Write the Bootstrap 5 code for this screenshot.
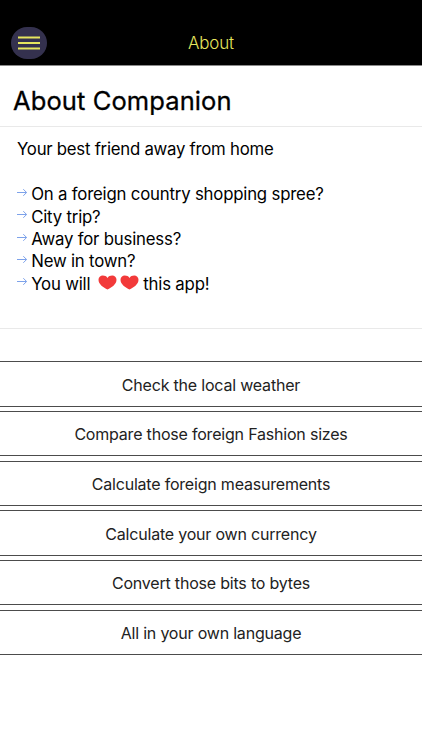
<!DOCTYPE html>
<html lang="en">
<head>
<meta charset="utf-8">
<meta name="viewport" content="width=device-width, initial-scale=1">
<title>About</title>
<link href="https://cdn.jsdelivr.net/npm/bootstrap@5.3.0/dist/css/bootstrap.min.css" rel="stylesheet">
<style>
body { font-family: Inter, Roboto, sans-serif; color: #000; min-height: 750px; overflow: hidden; }
.app-bar { height: 66px; background: #000; border-bottom: 1px solid #8a8a8a; padding: 21px 10.5px 0; display: grid; grid-template-columns: 37px 1fr 37px; }
.menu-btn, .menu-btn:hover { width: 36.5px; height: 32.5px; background: #34314e; border-radius: 16.25px; }
.app-title { color: #e6e65e; font-size: 17px; font-weight: 300; letter-spacing: -.15px; padding-top: 1.5px; }
.page-head { height: 61px; padding-left: 13px; padding-top: 10px; border-bottom: 1px solid #e9e9e9; }
.page-head h1 { font-size: 25.5px; font-weight: 400; letter-spacing: .1px; -webkit-text-stroke: .3px #000; }
.intro { height: 202px; padding: 11px 17px 0; border-bottom: 1px solid #e9e9e9; font-size: 16.8px; line-height: 22.35px; letter-spacing: -.2px; }
.tagline { letter-spacing: -.26px; }
.intro ul { margin-top: 23px; }
.intro li { height: 22.35px; white-space: pre; }
.arrow { width: 10px; height: 9px; margin: -4px 4.2px 0 0; }
.heart { width: 19px; height: 15px; margin: -3px 0 0 7.6px; }
.heart + .heart { margin-left: 3.4px; }
.features { margin-top: 32.3px; gap: 4.3px; }
.feature { height: 45.4px; border: solid #4c4c4c; border-width: 1px 0; border-radius: 0; font-size: 16px; color: #222; letter-spacing: -.2px; padding: 1.5px 0 0; }
</style>
<script src="https://cdn.jsdelivr.net/npm/bootstrap@5.3.0/dist/js/bootstrap.bundle.min.js"></script>
</head>
<body class="bg-white">
<svg class="d-none">
  <symbol id="arrow" viewBox="0 0 10 9"><path d="M0 4.5h9.6M6.3 1.2l3.3 3.3-3.3 3.3" fill="none" stroke="#7da2ea" stroke-width="1"/></symbol>
  <symbol id="heart" viewBox="0 0 19 15"><path d="M9.5 14.6C5.5 12.7.5 9.3.5 4.8.5 2.2 2.4.6 4.8.6c2 0 3.7.8 4.7 2.4C10.5 1.4 12.2.6 14.2.6c2.4 0 4.3 1.6 4.3 4.2 0 4.5-5 7.9-9 9.8z" fill="#f23a3a"/></symbol>
</svg>
<header class="app-bar align-items-center">
  <button class="menu-btn btn border-0 p-0 d-flex align-items-center justify-content-center" aria-label="Menu">
    <svg width="22" height="14" viewBox="0 0 22 14"><path d="M0 1.5h22M0 7h22M0 12.5h22" stroke="#e6e65e" stroke-width="1.9"/></svg>
  </button>
  <div class="app-title text-center">About</div>
</header>
<main>
  <div class="page-head d-flex align-items-center"><h1 class="mb-0">About Companion</h1></div>
  <section class="intro">
    <p class="tagline mb-0">Your best friend away from home</p>
    <ul class="list-unstyled mb-0">
      <li class="d-flex align-items-center"><svg class="arrow"><use href="#arrow"/></svg><span>On a foreign country shopping spree?</span></li>
      <li class="d-flex align-items-center"><svg class="arrow"><use href="#arrow"/></svg><span>City trip?</span></li>
      <li class="d-flex align-items-center"><svg class="arrow"><use href="#arrow"/></svg><span>Away for business?</span></li>
      <li class="d-flex align-items-center"><svg class="arrow"><use href="#arrow"/></svg><span>New in town?</span></li>
      <li class="d-flex align-items-center"><svg class="arrow"><use href="#arrow"/></svg><span>You will</span><svg class="heart"><use href="#heart"/></svg><svg class="heart"><use href="#heart"/></svg><span class="ms-1">this app!</span></li>
    </ul>
  </section>
  <div class="features d-flex flex-column">
    <button class="feature btn w-100">Check the local weather</button>
    <button class="feature btn w-100">Compare those foreign Fashion sizes</button>
    <button class="feature btn w-100">Calculate foreign measurements</button>
    <button class="feature btn w-100">Calculate your own currency</button>
    <button class="feature btn w-100">Convert those bits to bytes</button>
    <button class="feature btn w-100">All in your own language</button>
  </div>
</main>
</body>
</html>
